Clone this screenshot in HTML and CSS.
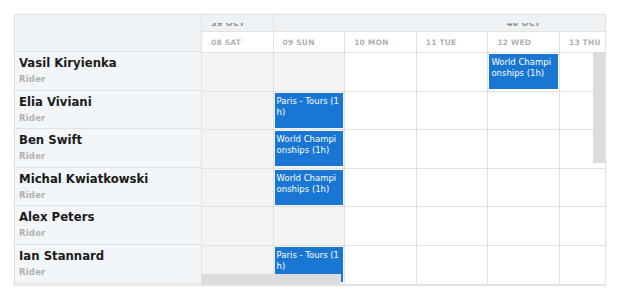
FILE: index.html
```html
<!DOCTYPE html>
<html lang="en">
<head>
  <meta charset="UTF-8">
  <meta name="viewport" content="width=device-width, initial-scale=1.0">
  <title>Rider Schedule</title>
  <link rel="stylesheet" href="styles.css">
</head>
<body>
  <div class="page">
    <div class="scheduler">
      <div class="resources">
        <div class="res-head"></div>
        <div class="res-row"><div class="res-name">Vasil Kiryienka</div><div class="res-role">Rider</div></div>
        <div class="res-row"><div class="res-name">Elia Viviani</div><div class="res-role">Rider</div></div>
        <div class="res-row"><div class="res-name">Ben Swift</div><div class="res-role">Rider</div></div>
        <div class="res-row"><div class="res-name">Michal Kwiatkowski</div><div class="res-role">Rider</div></div>
        <div class="res-row"><div class="res-name">Alex Peters</div><div class="res-role">Rider</div></div>
        <div class="res-row"><div class="res-name">Ian Stannard</div><div class="res-role">Rider</div></div>
      </div>

      <div class="timeline">
        <div class="months">
          <div class="month month-start"><div class="month-label"><span>39 OCT</span></div></div>
          <div class="month month-week"><div class="month-label"><span>40 OCT</span></div></div>
        </div>
        <div class="days">
          <div class="day">08 SAT</div>
          <div class="day">09 SUN</div>
          <div class="day">10 MON</div>
          <div class="day">11 TUE</div>
          <div class="day">12 WED</div>
          <div class="day">13 THU</div>
        </div>

        <div class="lane">
          <div class="cell weekend"></div>
          <div class="cell weekend"></div>
          <div class="cell"></div>
          <div class="cell"></div>
          <div class="cell"><div class="event">World Championships (1h)</div></div>
          <div class="cell"></div>
        </div>
        <div class="lane">
          <div class="cell weekend"></div>
          <div class="cell weekend"><div class="event">Paris - Tours (1h)</div></div>
          <div class="cell"></div>
          <div class="cell"></div>
          <div class="cell"></div>
          <div class="cell"></div>
        </div>
        <div class="lane">
          <div class="cell weekend"></div>
          <div class="cell weekend"><div class="event">World Championships (1h)</div></div>
          <div class="cell"></div>
          <div class="cell"></div>
          <div class="cell"></div>
          <div class="cell"></div>
        </div>
        <div class="lane">
          <div class="cell weekend"></div>
          <div class="cell weekend"><div class="event">World Championships (1h)</div></div>
          <div class="cell"></div>
          <div class="cell"></div>
          <div class="cell"></div>
          <div class="cell"></div>
        </div>
        <div class="lane">
          <div class="cell weekend"></div>
          <div class="cell weekend"></div>
          <div class="cell"></div>
          <div class="cell"></div>
          <div class="cell"></div>
          <div class="cell"></div>
        </div>
        <div class="lane">
          <div class="cell weekend"></div>
          <div class="cell weekend"><div class="event">Paris - Tours (1h)</div></div>
          <div class="cell"></div>
          <div class="cell"></div>
          <div class="cell"></div>
          <div class="cell"></div>
        </div>
      </div>

      <!-- overlay scrollbars -->
      <div class="scroll-v"></div>
      <div class="scroll-h"></div>
    </div>
  </div>
</body>
</html>
```

FILE: styles.css
```css
* {
  margin: 0;
  padding: 0;
  box-sizing: border-box;
}

:root {
  --line-color: #e2e2e2;
  --head-bg: #eef2f5;
  --res-bg: #f3f6f9;
  --weekend-bg: #f4f4f4;
  --event-bg: #1976d2;
  --muted: #b0b0b0;
  --col-width: 71.6px;
  --row-height: 38.6px;
}

body {
  background: #fff;
  font-family: 'DejaVu Sans', sans-serif;
  color: #1a1a1a;
}

.page {
  padding: 14px 0 0 14px;
}

.scheduler {
  position: relative;
  width: 592px;
  height: 272px;
  border: 1px solid var(--line-color);
  display: grid;
  grid-template-columns: 187px 1fr;
  overflow: hidden;
  box-shadow: 0 1px 2px rgba(0, 0, 0, 0.06);
}

/* left resource column */
.resources {
  background: var(--res-bg);
  border-right: 1px solid var(--line-color);
}

.res-head {
  height: 37px;
  background: var(--head-bg);
  border-bottom: 1px solid var(--line-color);
}

.res-row {
  height: var(--row-height);
  padding: 2px 0 0 4px;
  border-bottom: 1px solid var(--line-color);
}

.res-name {
  font-family: 'DejaVu Sans Condensed', 'DejaVu Sans', sans-serif;
  font-stretch: condensed;
  font-size: 13px;
  font-weight: 700;
  line-height: 17px;
}

.res-role {
  margin-top: 3px;
  font-size: 8.5px;
  font-weight: 700;
  color: var(--muted);
  letter-spacing: 0.2px;
}

/* timeline */
.timeline {
  overflow: hidden;
  min-width: 0;
}

.months {
  display: flex;
  height: 17px;
  background: var(--head-bg);
  border-bottom: 1px solid var(--line-color);
}

.month {
  flex: 0 0 auto;
  border-right: 1px solid var(--line-color);
}

.month-start {
  width: var(--col-width);
  padding-left: 9px;
}

.month-week {
  width: calc(var(--col-width) * 7);
}

.month-label {
  display: flex;
  align-items: flex-end;
  height: 5px;
  margin-top: 8px;
  overflow: hidden;
  font-size: 8px;
  font-weight: 700;
  line-height: 8px;
  color: #8a8a8a;
  letter-spacing: 0.3px;
}

.month-week .month-label {
  justify-content: center;
}

.days,
.lane {
  display: flex;
}

.days {
  height: 21px;
  background: #fff;
  border-bottom: 1px solid var(--line-color);
}

.day {
  flex: 0 0 var(--col-width);
  padding-left: 9px;
  border-right: 1px solid var(--line-color);
  font-size: 7.5px;
  font-weight: 700;
  line-height: 21px;
  color: var(--muted);
  letter-spacing: 0.2px;
  white-space: nowrap;
}

.lane {
  height: var(--row-height);
  border-bottom: 1px solid var(--line-color);
}

.cell {
  flex: 0 0 var(--col-width);
  border-right: 1px solid var(--line-color);
  background: #fff;
  padding: 1px 1px 0 1px;
}

.cell.weekend {
  background: var(--weekend-bg);
}

.event {
  height: 35px;
  padding: 3px 3.5px 2px 2px;
  background: var(--event-bg);
  color: #fff;
  font-size: 8.5px;
  line-height: 11px;
  word-break: break-all;
}

/* overlay scrollbars */
.scroll-v {
  position: absolute;
  top: 37px;
  right: 0;
  width: 12px;
  height: 111px;
  background: #dcdcdc;
}

.scroll-h {
  position: absolute;
  left: 187px;
  bottom: 1px;
  width: 139px;
  height: 10px;
  background: #dcdcdc;
}
```
